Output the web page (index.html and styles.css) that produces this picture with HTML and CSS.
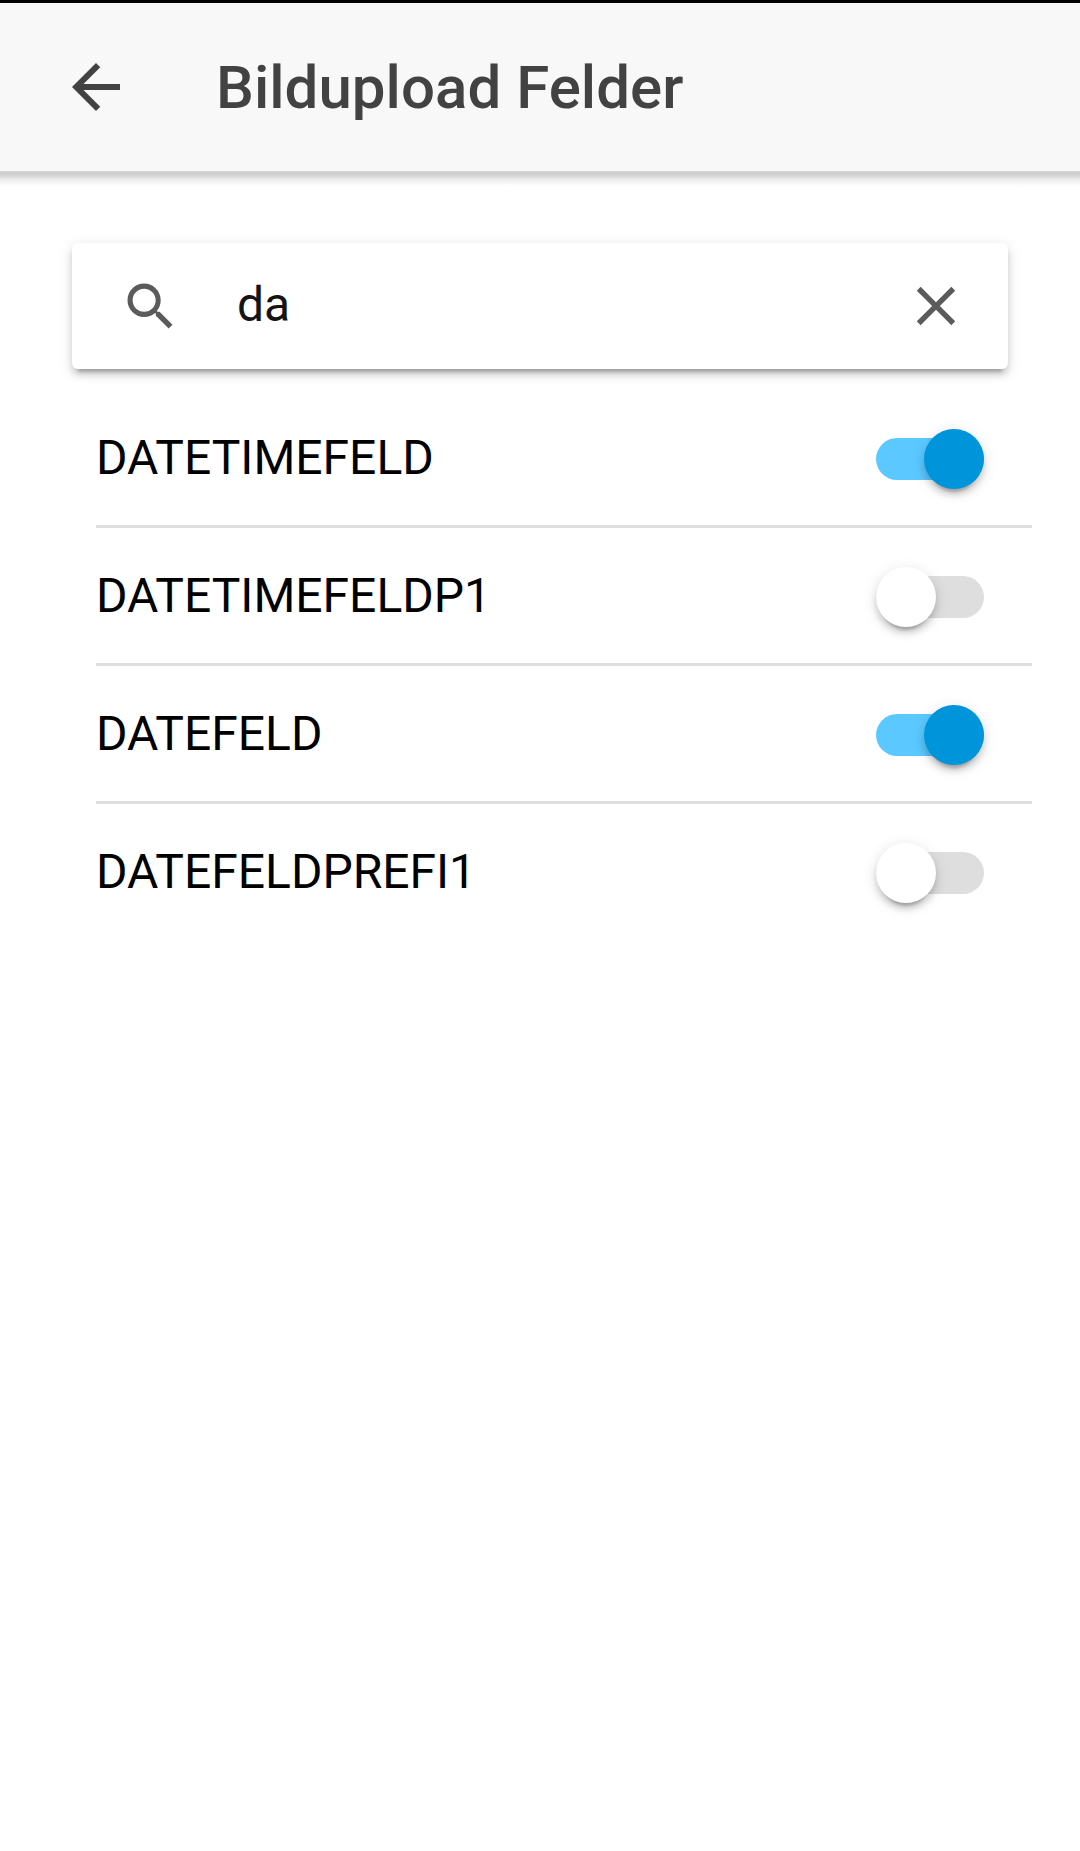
FILE: index.html
```html
<!DOCTYPE html>
<html lang="de">
<head>
<meta charset="utf-8">
<title>Bildupload Felder</title>
<link rel="stylesheet" href="styles.css">
</head>
<body>
<header class="toolbar">
  <svg class="back-icon" viewBox="0 0 24 24" aria-label="Zurück"><path d="M20 11H7.83l5.59-5.59L12 4l-8 8 8 8 1.41-1.41L7.83 13H20z"/></svg>
  <h1 class="title">Bildupload Felder</h1>
</header>
<main class="content">
  <div class="searchbar">
    <svg class="search-icon" viewBox="0 0 512 512"><path d="M337.509 305.372h-17.501l-6.571-5.486c20.791-25.181 33.922-57.257 33.922-93.257C347.358 127.632 283.896 64 205.135 64 127.452 64 64 127.632 64 206.629s63.452 142.628 142.225 142.628c35.011 0 67.831-13.167 92.991-34.008l6.561 5.487v17.551L415.18 448 448 415.086 337.509 305.372zm-131.284 0c-54.702 0-98.463-43.887-98.463-98.743 0-54.858 43.761-98.742 98.463-98.742 54.7 0 98.462 43.884 98.462 98.742 0 54.856-43.762 98.743-98.462 98.743z"/></svg>
    <span class="search-text">da</span>
    <svg class="clear-icon" viewBox="0 0 512 512"><path d="M405 136.798L375.202 107 256 226.202 136.798 107 107 136.798 226.202 256 107 375.202 136.798 405 256 285.798 375.202 405 405 375.202 285.798 256z"/></svg>
  </div>
  <ul class="list">
    <li class="item"><span class="label">DATETIMEFELD</span><span class="toggle toggle-on"><span class="thumb"></span></span></li>
    <li class="item"><span class="label">DATETIMEFELDP1</span><span class="toggle"><span class="thumb"></span></span></li>
    <li class="item"><span class="label">DATEFELD</span><span class="toggle toggle-on"><span class="thumb"></span></span></li>
    <li class="item"><span class="label">DATEFELDPREFI1</span><span class="toggle"><span class="thumb"></span></span></li>
  </ul>
</main>
</body>
</html>
```
FILE: styles.css
```css
* {
  box-sizing: border-box;
}

body {
  margin: 0;
  min-height: 1851px;
  background: #fff;
  color: #000;
  font-family: Roboto, "Liberation Sans", sans-serif;
}

.toolbar {
  display: flex;
  align-items: center;
  gap: 84px;
  height: 171px;
  padding: 0 60px;
  border-top: 3px solid #000;
  background: #f8f8f8;
}

.back-icon {
  width: 72px;
  height: 72px;
  fill: #424242;
}

.title {
  margin: 0;
  padding-top: 2px;
  color: #424242;
  font-size: 60px;
  font-weight: 500;
  letter-spacing: .04px;
  line-height: 72px;
}

.content {
  padding: 72px 48px 0 72px;
  background: linear-gradient(#d8d8d8 0, #cdcdcd 2px, #d8d8d8 5px, #eee 9px, #fafafa 13px, #fff 16px) no-repeat 0 0 / 100% 16px;
}

.searchbar {
  display: flex;
  align-items: center;
  height: 126px;
  margin-right: 24px;
  padding: 0 39px 0 48px;
  border-radius: 6px;
  background: #fff;
  box-shadow:
    0 6px 6px 0 rgba(0, 0, 0, .14),
    0 9px 3px -6px rgba(0, 0, 0, .2),
    0 3px 15px 0 rgba(0, 0, 0, .12);
}

.search-icon {
  width: 60px;
  height: 60px;
  fill: #5b5b5b;
}

.search-text {
  flex: 1;
  margin-left: 57px;
  padding-bottom: 2px;
  color: #141414;
  font-size: 48px;
  line-height: 60px;
}

.clear-icon {
  width: 66px;
  height: 66px;
  fill: #5b5b5b;
}

.list {
  margin: 21px 0 0;
  padding: 0 0 0 24px;
  list-style: none;
}

.item {
  display: flex;
  align-items: center;
  justify-content: space-between;
  height: 138px;
  padding-right: 48px;
  border-bottom: 3px solid #dedede;
}

.item:last-child {
  border-bottom-color: transparent;
}

.label {
  font-size: 48px;
  line-height: 60px;
}

.toggle {
  display: flex;
  align-items: center;
  width: 108px;
  height: 42px;
  margin-top: 3px;
  border-radius: 21px;
  background: #dedede;
}

.thumb {
  width: 60px;
  height: 60px;
  flex: none;
  border-radius: 50%;
  background: #fff;
  box-shadow:
    0 6px 6px 0 rgba(0, 0, 0, .14),
    0 9px 3px -6px rgba(0, 0, 0, .2),
    0 3px 15px 0 rgba(0, 0, 0, .12);
}

.toggle-on {
  justify-content: flex-end;
  background: #5bc9ff;
}

.toggle-on .thumb {
  background: #0094db;
}
```
